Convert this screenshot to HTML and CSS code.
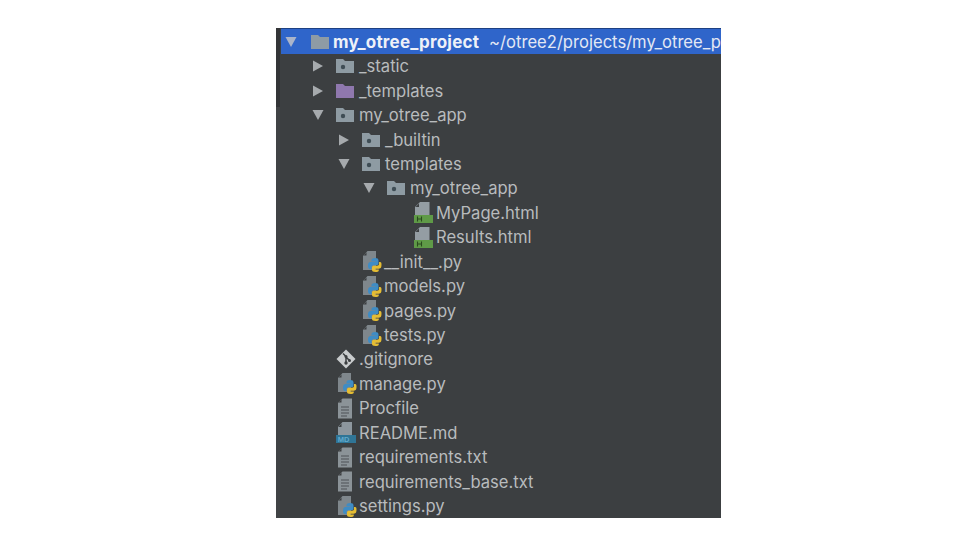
FILE: index.html
```html
<!DOCTYPE html>
<html lang="en">
<head>
<meta charset="utf-8">
<title>Project tree</title>
<link rel="stylesheet" href="styles.css">
</head>
<body>
<svg class="defs" width="0" height="0" aria-hidden="true">
  <symbol id="arrow-r" viewBox="0 0 12 12"><path d="M1 0.500L11 6L1 11.500Z" fill="#a6aaad"/></symbol>
  <symbol id="arrow-d" viewBox="0 0 12 12"><path d="M0.500 1L11.500 1L6 11Z" fill="#a6aaad"/></symbol>
  <symbol id="arrow-head" viewBox="0 0 12 12"><path d="M0.500 1L11.500 1L6 11Z" fill="#aab4ca"/></symbol>
  <symbol id="folder" viewBox="0 0 18 14"><path d="M0 0H7L9 2H18V14H0Z" fill="#8e9ba5"/></symbol>
  <symbol id="folder-dot" viewBox="0 0 18 14"><path d="M0 0H7L9 2H18V14H0Z" fill="#8e9ba3"/><circle cx="7" cy="8" r="2.200" fill="#3f4d55"/></symbol>
  <symbol id="folder-purple" viewBox="0 0 18 14"><path d="M0 0H7L9 2H18V14H0Z" fill="#8f78ae"/></symbol>
  <symbol id="doc" viewBox="0 0 21 21"><path d="M6.500 0.500H16V20.500H2V5Z" fill="#8b9398"/><path d="M5.500 1.500V4.500H2.500Z" fill="#3c3f41"/><path d="M5 9H13M5 12H13M5 15H13M5 18H11" stroke="#4f5356" stroke-width="1.100"/></symbol>
  <symbol id="html" viewBox="0 0 19 21"><path d="M6 0H15.500V13H1V5Z" fill="#949da3"/><path d="M5 1.500V5H1.500Z" fill="#3c3f41"/><rect x="0" y="13" width="19" height="8" fill="#5f9a47"/><path d="M3.500 14.500V19.500M7.500 14.500V19.500M3.500 17H7.500" stroke="#2a4a1f" stroke-width="1.100" fill="none"/></symbol>
  <symbol id="py" viewBox="0 0 21 21"><path d="M6.500 0H15V19H2V5Z" fill="#7f878c"/><path d="M5.500 1.500V4.500H2.500Z" fill="#3c3f41"/><g transform="translate(1 0)"><path d="M6 15C6 11.500 7.500 10.800 10 10.800H13.500V10.200H9.500V9C9.500 7.700 11 7 13 7C15.500 7 16.500 7.800 16.500 9.500V12.500C16.500 13.700 15.500 14.300 14.500 14.300H11.500C10 14.300 9.500 15.300 9.500 16.500V18H8C6.800 18 6 16.800 6 15Z" fill="#3f8cc4"/><path d="M19.500 13.500C19.500 17 18.500 17.800 16 17.800H13V18.500H16.800V19.500C16.800 20.700 15 21 13.500 21C11 21 10 20.300 10 19V16.500C10 15.300 11 14.800 12 14.800H15C16.500 14.800 17 13.800 17 12.500V11H18C19.300 11 19.500 12 19.500 13.500Z" fill="#e5bd33"/></g></symbol>
  <symbol id="git" viewBox="0 0 21 21"><path d="M10 0.500L19.500 10L10 19.500L0.500 10Z" fill="#c9cccd"/><path d="M7 4.500L10 7.500V13M10 8L13.500 11.500" stroke="#3c3f41" stroke-width="1.500" fill="none"/><circle cx="10" cy="14" r="1.700" fill="#3c3f41"/><circle cx="10" cy="7.500" r="1.500" fill="#3c3f41"/><circle cx="13.500" cy="11.500" r="1.500" fill="#3c3f41"/></symbol>
</svg>

<main class="panel">
  <div class="row head">
    <svg class="arrow"><use href="#arrow-head"/></svg>
    <svg class="ico folder-ico"><use href="#folder"/></svg>
    <span class="name">my_otree_project</span><span class="path">~/otree2/projects/my_otree_p</span>
  </div>
  <div class="tree">
    <div class="row d1"><svg class="arrow"><use href="#arrow-r"/></svg><svg class="ico folder-ico"><use href="#folder-dot"/></svg><span>_static</span></div>
    <div class="row d1"><svg class="arrow"><use href="#arrow-r"/></svg><svg class="ico folder-ico"><use href="#folder-purple"/></svg><span>_templates</span></div>
    <div class="row d1"><svg class="arrow"><use href="#arrow-d"/></svg><svg class="ico folder-ico"><use href="#folder-dot"/></svg><span>my_otree_app</span></div>
    <div class="row d2"><svg class="arrow"><use href="#arrow-r"/></svg><svg class="ico folder-ico"><use href="#folder-dot"/></svg><span>_builtin</span></div>
    <div class="row d2"><svg class="arrow"><use href="#arrow-d"/></svg><svg class="ico folder-ico"><use href="#folder-dot"/></svg><span>templates</span></div>
    <div class="row d3"><svg class="arrow"><use href="#arrow-d"/></svg><svg class="ico folder-ico"><use href="#folder-dot"/></svg><span>my_otree_app</span></div>
    <div class="row f4"><svg class="ico html-ico"><use href="#html"/></svg><span>MyPage.html</span></div>
    <div class="row f4"><svg class="ico html-ico"><use href="#html"/></svg><span>Results.html</span></div>
    <div class="row f2"><svg class="ico file-ico"><use href="#py"/></svg><span>__init__.py</span></div>
    <div class="row f2"><svg class="ico file-ico"><use href="#py"/></svg><span>models.py</span></div>
    <div class="row f2"><svg class="ico file-ico"><use href="#py"/></svg><span>pages.py</span></div>
    <div class="row f2"><svg class="ico file-ico"><use href="#py"/></svg><span>tests.py</span></div>
    <div class="row f1"><svg class="ico file-ico"><use href="#git"/></svg><span>.gitignore</span></div>
    <div class="row f1"><svg class="ico file-ico"><use href="#py"/></svg><span>manage.py</span></div>
    <div class="row f1"><svg class="ico file-ico"><use href="#doc"/></svg><span>Procfile</span></div>
    <div class="row f1"><svg class="ico file-ico" viewBox="0 0 21 21"><path d="M6.500 0H16V13H2V5Z" fill="#8d979e"/><path d="M5.500 1.500V5H2.500Z" fill="#3c3f41"/><rect x="0" y="13" width="20" height="8" fill="#2f7596"/><text x="7.500" y="20" text-anchor="middle" class="md-label">MD</text></svg><span>README.md</span></div>
    <div class="row f1"><svg class="ico file-ico"><use href="#doc"/></svg><span>requirements.txt</span></div>
    <div class="row f1"><svg class="ico file-ico"><use href="#doc"/></svg><span>requirements_base.txt</span></div>
    <div class="row f1"><svg class="ico file-ico"><use href="#py"/></svg><span>settings.py</span></div>
  </div>
</main>
</body>
</html>
```

FILE: styles.css
```css
html, body {
  margin: 0;
  padding: 0;
  background: #ffffff;
}
body {
  width: 960px;
  height: 540px;
  overflow: hidden;
}
.defs {
  position: absolute;
}
.md-label {
  font: bold 7.500px "Liberation Sans", sans-serif;
  fill: #62a9cc;
}
.panel {
  width: 445px;
  height: 490px;
  margin: 28px 0 0 276px;
  background: linear-gradient(#333537 0 79px, #414345 79px) left / 4px 100% no-repeat, #3c3f41;
  overflow: hidden;
  font-family: Inter, sans-serif;
  font-size: 16.600px;
  color: #b8bbbd;
}
.row {
  display: flex;
  align-items: center;
  height: 24.440px;
  white-space: nowrap;
}
.head {
  height: 26px;
  padding-left: 4px;
  margin-left: 5px;
  background: #2f65ca;
  border-top: 1px solid #1d4183;
  box-sizing: border-box;
  color: #e3e8f4;
}
.head .arrow {
  margin-right: 14px;
}
.head .folder-ico {
  margin-right: 4px;
}
.head .name {
  font-size: 17px;
  font-weight: 700;
  letter-spacing: 0.200px;
  color: #eef1f8;
  margin-right: 10px;
}
.arrow {
  width: 12px;
  height: 12px;
  flex: none;
  margin-right: 12px;
}
.ico {
  flex: none;
}
.folder-ico {
  width: 18px;
  height: 14px;
  margin-right: 5px;
}
.html-ico {
  width: 19px;
  height: 21px;
  margin-right: 3px;
}
.file-ico {
  width: 21px;
  height: 21px;
  margin-right: 2px;
}
.d1 { padding-left: 36px; }
.d2 { padding-left: 62px; }
.d3 { padding-left: 87px; }
.f4 { padding-left: 138px; }
.f2 { padding-left: 85px; }
.f1 { padding-left: 60px; }
```
